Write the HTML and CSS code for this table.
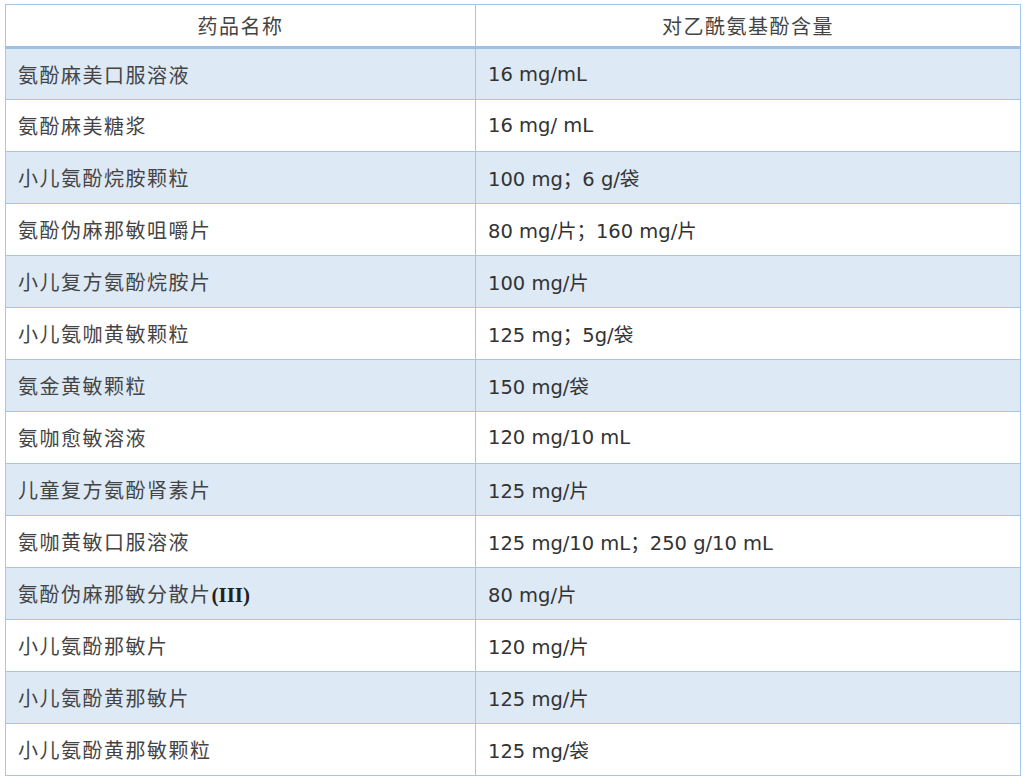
FILE: index.html
```html
<!DOCTYPE html>
<html lang="zh">
<head>
<meta charset="utf-8">
<title>对乙酰氨基酚含量</title>
<link rel="stylesheet" href="styles.css">
</head>
<body>
<table class="drug-table">
  <thead>
    <tr><th class="col-name">药品名称</th><th class="col-dose">对乙酰氨基酚含量</th></tr>
  </thead>
  <tbody>
    <tr class="odd"><td>氨酚麻美口服溶液</td><td>16 mg/mL</td></tr>
    <tr><td>氨酚麻美糖浆</td><td>16 mg/ mL</td></tr>
    <tr class="odd"><td>小儿氨酚烷胺颗粒</td><td>100 mg；6 g/袋</td></tr>
    <tr><td>氨酚伪麻那敏咀嚼片</td><td>80 mg/片；160 mg/片</td></tr>
    <tr class="odd"><td>小儿复方氨酚烷胺片</td><td>100 mg/片</td></tr>
    <tr><td>小儿氨咖黄敏颗粒</td><td>125 mg；5g/袋</td></tr>
    <tr class="odd"><td>氨金黄敏颗粒</td><td>150 mg/袋</td></tr>
    <tr><td>氨咖愈敏溶液</td><td>120 mg/10 mL</td></tr>
    <tr class="odd"><td>儿童复方氨酚肾素片</td><td>125 mg/片</td></tr>
    <tr><td>氨咖黄敏口服溶液</td><td>125 mg/10 mL；250 g/10 mL</td></tr>
    <tr class="odd"><td>氨酚伪麻那敏分散片<span class="roman">(III)</span></td><td>80 mg/片</td></tr>
    <tr><td>小儿氨酚那敏片</td><td>120 mg/片</td></tr>
    <tr class="odd"><td>小儿氨酚黄那敏片</td><td>125 mg/片</td></tr>
    <tr><td>小儿氨酚黄那敏颗粒</td><td>125 mg/袋</td></tr>
  </tbody>
</table>
</body>
</html>
```

FILE: styles.css
```css
html, body {
  margin: 0;
  padding: 0;
  background: #ffffff;
}
body {
  padding: 4px 0 0 5px;
  font-family: "DejaVu Sans", "Noto Sans CJK SC", sans-serif;
  color: #333333;
}
.drug-table {
  border-collapse: collapse;
  width: 1015px;
  table-layout: fixed;
  font-size: 19.5px;
}
.drug-table th,
.drug-table td {
  box-sizing: border-box;
  border: 1px solid #a6c6e6;
  text-align: left;
  padding: 0 12px;
  font-weight: normal;
}
.drug-table th {
  height: 43px;
  text-align: center;
  border-bottom: 3px solid #9dc0e5;
  font-size: 20px;
  letter-spacing: 1.5px;
  color: #444444;
}
.drug-table td {
  height: 52px;
}
.drug-table td:first-child {
  font-size: 20px;
  letter-spacing: 1.5px;
  color: #444444;
}
.roman {
  font-family: "Liberation Serif", serif;
  font-size: 21px;
  font-weight: bold;
  letter-spacing: 0;
  color: #222222;
}
.col-name { width: 470px; }
.col-dose { width: 545px; }
.drug-table tr.odd td {
  background: #dde9f5;
}
```
